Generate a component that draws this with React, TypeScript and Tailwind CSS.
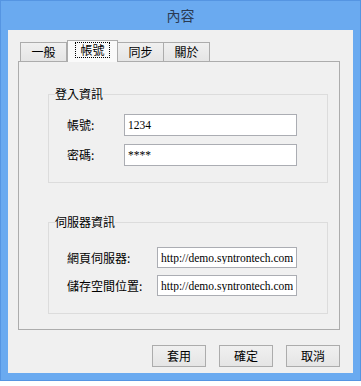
const cjk = "font-['Noto_Sans_CJK_TC','Noto_Sans_CJK_SC',sans-serif]";
const serif = "font-['Liberation_Serif','Noto_Sans_CJK_TC',serif]";

const tabs = [
  { label: "一般", active: false },
  { label: "帳號", active: true },
  { label: "同步", active: false },
  { label: "關於", active: false },
];

function Field({
  label,
  value,
  labelWidth,
  inputWidth,
  height,
}: {
  label: string;
  value: string;
  labelWidth: string;
  inputWidth: string;
  height: string;
}) {
  return (
    <div className="flex items-center">
      <span className={`${labelWidth} text-[12px] leading-[16px] text-black`}>{label}</span>
      <input
        readOnly
        value={value}
        className={`${inputWidth} ${height} ${serif} border border-[#abadb3] bg-white px-[3px] text-[11.5px] text-black outline-none`}
      />
    </div>
  );
}

function Button({ children }: { children: string }) {
  return (
    <button
      type="button"
      className="h-[22px] w-[54px] border border-[#acacac] bg-gradient-to-b from-[#f0f0f0] to-[#e5e5e5] text-[12px] leading-[16px] text-black"
    >
      {children}
    </button>
  );
}

export default function App() {
  return (
    <div className={`h-[386px] w-[361px] bg-white ${cjk}`}>
      <div className="flex h-[381px] flex-col border border-[#5595e2] bg-[#6aaaf0]">
        <div className="flex h-[29px] items-center justify-center text-[14px] text-[#2a3a52]">內容</div>

        <div className="mx-[7px] mb-[7px] flex flex-1 flex-col bg-[#f0f0f0] pl-[10px] pr-[13px] pt-[10px]">
          <div className="flex h-[21px] items-end pl-[2px]">
            {tabs.map((tab) =>
              tab.active ? (
                <div
                  key={tab.label}
                  className="relative z-10 -mb-px flex h-[22px] w-[51px] items-start justify-center border border-b-0 border-[#acacac] bg-[#fafafa] pt-px"
                >
                  <span className="border border-dotted border-black px-[4px] text-[12px] leading-[14px] text-black">
                    {tab.label}
                  </span>
                </div>
              ) : (
                <div
                  key={tab.label}
                  className="-ml-px flex h-[19px] w-[47px] items-center justify-center border border-b-0 border-[#acacac] bg-gradient-to-b from-[#f0f0f0] to-[#e5e5e5] text-[12px] leading-[16px] text-black first:ml-0"
                >
                  {tab.label}
                </div>
              )
            )}
          </div>

          <div className="h-[269px] border border-[#acacac] bg-[#f0f0f0] pl-[29px] pr-[11px] pt-[24px]">
            <fieldset className="border border-[#dcdcdc] p-0">
              <legend className="ml-[6px] p-0 text-[12px] leading-[16px] text-black">登入資訊</legend>
              <div className="flex flex-col gap-[8px] pb-[16px] pl-[18px] pt-[12px]">
                <Field label="帳號:" value="1234" labelWidth="w-[57px]" inputWidth="w-[173px]" height="h-[22px]" />
                <Field label="密碼:" value="****" labelWidth="w-[57px]" inputWidth="w-[173px]" height="h-[22px]" />
              </div>
            </fieldset>

            <fieldset className="mt-[31px] border border-[#dcdcdc] p-0">
              <legend className="ml-[6px] p-0 text-[12px] leading-[16px] text-black">伺服器資訊</legend>
              <div className="flex flex-col gap-[7px] pb-[17px] pl-[18px] pt-[17px]">
                <Field
                  label="網頁伺服器:"
                  value="http://demo.syntrontech.com"
                  labelWidth="w-[90px]"
                  inputWidth="w-[140px]"
                  height="h-[21px]"
                />
                <Field
                  label="儲存空間位置:"
                  value="http://demo.syntrontech.com"
                  labelWidth="w-[90px]"
                  inputWidth="w-[140px]"
                  height="h-[21px]"
                />
              </div>
            </fieldset>
          </div>

          <div className="mt-[15px] flex justify-end gap-[13px]">
            <Button>套用</Button>
            <Button>確定</Button>
            <Button>取消</Button>
          </div>
        </div>
      </div>
    </div>
  );
}
